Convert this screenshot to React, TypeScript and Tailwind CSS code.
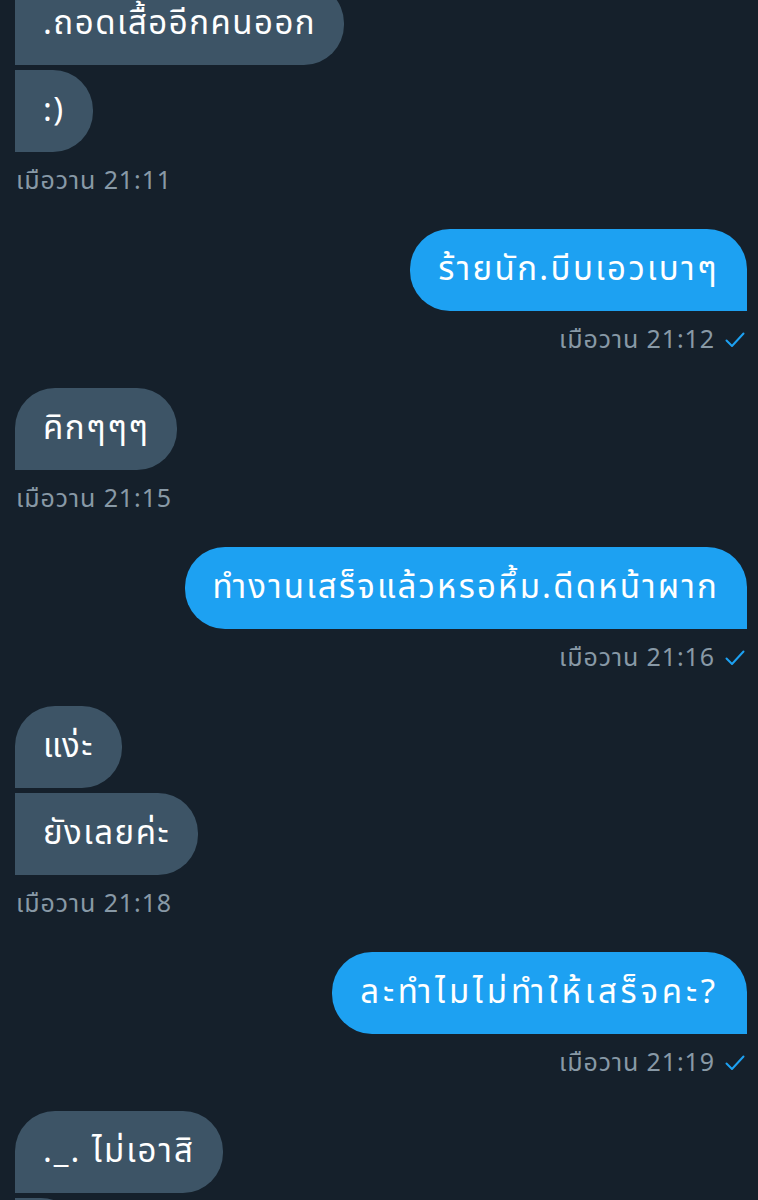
import React from "react";

type Bubble = { text: string; cls: string };
type Group = { side: "in" | "out"; msgs: Bubble[]; time: string };

const groups: Group[] = [
  {
    side: "in",
    msgs: [
      { text: ".ถอดเสื้ออีกคนออก", cls: "tracking-[1.5px]" },
      { text: ":)", cls: "tracking-[1.5px]" },
    ],
    time: "เมือวาน 21:11",
  },
  { side: "out", msgs: [{ text: "ร้ายนัก.บีบเอวเบาๆ", cls: "tracking-[2.4px]" }], time: "เมือวาน 21:12" },
  { side: "in", msgs: [{ text: "คิกๆๆๆ", cls: "tracking-[1.5px]" }], time: "เมือวาน 21:15" },
  { side: "out", msgs: [{ text: "ทำงานเสร็จแล้วหรอหึ้ม.ดีดหน้าผาก", cls: "tracking-[2.2px]" }], time: "เมือวาน 21:16" },
  {
    side: "in",
    msgs: [
      { text: "แง่ะ", cls: "tracking-[1.5px]" },
      { text: "ยังเลยค่ะ", cls: "tracking-[1.5px]" },
    ],
    time: "เมือวาน 21:18",
  },
  { side: "out", msgs: [{ text: "ละทำไมไม่ทำให้เสร็จคะ?", cls: "tracking-[3.8px]" }], time: "เมือวาน 21:19" },
  {
    side: "in",
    msgs: [
      { text: "._. ไม่เอาสิ", cls: "tracking-[2px]" },
      { text: "\u00a0", cls: "tracking-[1.5px]" },
    ],
    time: "",
  },
];

const font = { fontFamily: '"Noto Sans Thai", "Noto Sans", "Liberation Sans", sans-serif' };

function Check() {
  return (
    <svg width="20" height="18" viewBox="0 0 20 18" fill="none">
      <path d="M1.5 9.5 L7 15 L18.5 2.5" stroke="#1da1f2" strokeWidth="2" strokeLinecap="round" strokeLinejoin="round" />
    </svg>
  );
}

export default function App() {
  return (
    <div className="w-[758px] h-[1200px] overflow-hidden bg-[#15202b]" style={font}>
      <div className="-mt-[17px] flex flex-col">
        {groups.map((g, gi) => {
          const isIn = g.side === "in";
          return (
            <div key={gi} className={`flex flex-col mb-[33px] ${isIn ? "items-start pl-[15px]" : "items-end pr-[11px]"}`}>
              <div className={`flex flex-col gap-[5px] ${isIn ? "items-start" : "items-end"}`}>
                {g.msgs.map((m, mi) => {
                  const first = mi === 0;
                  const shape = isIn
                    ? `bg-[#3d5466] rounded-r-[40px] ${first && gi !== 0 ? "rounded-tl-[40px]" : ""}`
                    : `bg-[#1da1f2] rounded-l-[40px] rounded-tr-[40px]`;
                  return (
                    <div key={mi} className={`h-[82px] flex items-center px-[28px] text-white text-[33px] leading-[40px] whitespace-nowrap ${m.cls} ${shape}`}>
                      {m.text}
                    </div>
                  );
                })}
              </div>
              {g.time && (
                <div className={`mt-[14px] h-[30px] flex items-center gap-[10px] text-[25px] tracking-[0.9px] leading-[30px] text-[#8899a6] ${isIn ? "pl-[1px]" : "pr-[2px]"}`}>
                  <span>{g.time}</span>
                  {!isIn && <Check />}
                </div>
              )}
            </div>
          );
        })}
      </div>
    </div>
  );
}
